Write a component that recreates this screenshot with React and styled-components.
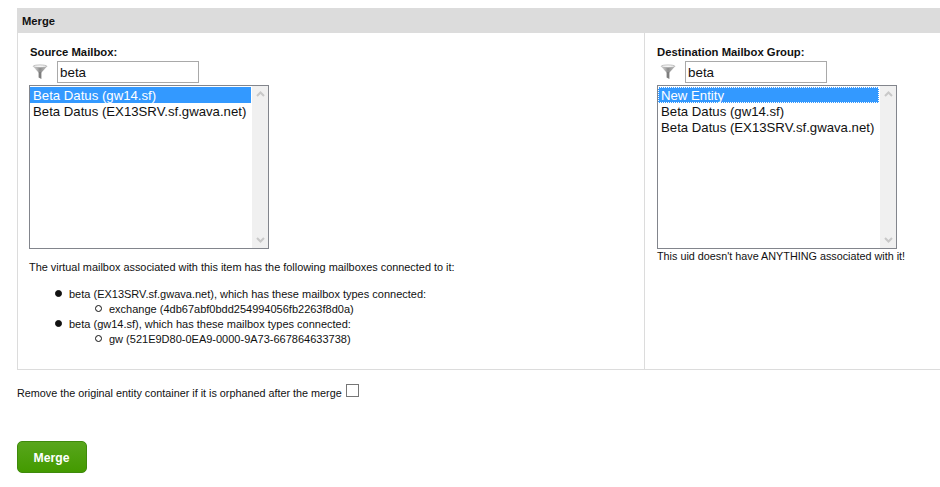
import styled, { createGlobalStyle } from "styled-components";

const GlobalStyle = createGlobalStyle`
  html, body {
    margin: 0;
    padding: 0;
    background: #fff;
    overflow: hidden;
  }
  body {
    font-family: "Liberation Sans", Arial, sans-serif;
    font-size: 11px;
    color: #111;
  }
`;

const Page = styled.div`
  width: 940px;
  height: 487px;
  padding: 8px 0 0 17px;
  box-sizing: border-box;
  overflow: hidden;
`;

const SectionTitle = styled.div`
  height: 25px;
  line-height: 26px;
  padding-left: 5px;
  background: #dcdcdc;
  font-size: 11.2px;
  font-weight: bold;
`;

const Panel = styled.div`
  display: grid;
  grid-template-columns: 626px 1fr;
  height: 336px;
  border-left: 1px solid #dcdcdc;
  border-bottom: 1px solid #dcdcdc;
`;

const Column = styled.div`
  padding: 13px 0 0 ${(p) => p.$pad}px;
  border-left: ${(p) => (p.$divider ? "1px solid #dcdcdc" : "none")};
`;

const FieldLabel = styled.div`
  padding-left: ${(p) => p.$indent || 0}px;
  font-size: 11.3px;
  font-weight: bold;
  line-height: 13px;
`;

const FilterRow = styled.div`
  display: flex;
  align-items: center;
  gap: 9px;
  height: 22px;
  margin-top: 2px;
  padding-left: 3px;
`;

const FilterInput = styled.input`
  width: 142px;
  height: 22px;
  box-sizing: border-box;
  border: 1px solid #a9a9a9;
  padding: 0 2px;
  font-family: inherit;
  font-size: 13.4px;
  color: #111;
  outline: none;
`;

const ListBox = styled.div`
  display: flex;
  width: 240px;
  height: 164px;
  margin-top: 2px;
  box-sizing: border-box;
  border: 1px solid #82858c;
  background: #fff;
`;

const Options = styled.div`
  flex: 1;
  padding: 1px 1px 0 0;
`;

const Option = styled.div`
  height: 16px;
  line-height: 17px;
  padding-left: 3px;
  font-size: 13.2px;
  white-space: nowrap;
  background: ${(p) => (p.$selected ? "#3399ff" : "transparent")};
  color: ${(p) => (p.$selected ? "#fff" : "#111")};
  outline: ${(p) => (p.$focused ? "1px dotted #fff" : "none")};
  outline-offset: -1px;
`;

const Scrollbar = styled.div`
  display: flex;
  flex-direction: column;
  justify-content: space-between;
  align-items: center;
  width: 16px;
  padding: 5px 0;
  box-sizing: border-box;
  background: #f0f0f0;
`;

const Note = styled.div`
  font-size: ${(p) => p.$size}px;
  line-height: 12px;
  margin-top: ${(p) => p.$top}px;
`;

const OuterList = styled.ul`
  margin: 14px 0 0;
  padding: 0 0 0 40px;
  font-size: 11px;
  line-height: 15px;
  list-style: none;
`;

const InnerList = styled.ul`
  margin: 0;
  padding: 0 0 0 40px;
  list-style: none;
`;

const Item = styled.li`
  position: relative;

  &::before {
    content: "";
    position: absolute;
    left: -14px;
    top: 3px;
    width: 7px;
    height: 7px;
    box-sizing: border-box;
    border-radius: 50%;
    border: 1.5px solid #111;
    background: ${(p) => (p.$hollow ? "#fff" : "#111")};
  }
`;

const OrphanRow = styled.div`
  display: flex;
  align-items: flex-start;
  margin-top: 14px;
  height: 16px;
  font-size: 10.8px;
  line-height: 19px;
`;

const OrphanBox = styled.span`
  width: 11px;
  height: 11px;
  margin-left: 4px;
  border: 1px solid #767676;
  background: #fff;
`;

const MergeButton = styled.button`
  display: block;
  width: 70px;
  height: 32px;
  margin-top: 41px;
  border: 1px solid #3f8a0c;
  border-radius: 5px;
  background: linear-gradient(#58a61c, #439a00);
  color: #fff;
  font-family: inherit;
  font-size: 12.2px;
  font-weight: bold;
  padding: 1px 1px 0 0;
`;

const FunnelIcon = ({ id }) => (
  <svg width="16" height="16" viewBox="0 0 16 16">
    <defs>
      <linearGradient id={id} x1="0" x2="1" y1="0" y2="0">
        <stop offset="0" stopColor="#ececec" />
        <stop offset="0.5" stopColor="#8c8c8c" />
        <stop offset="1" stopColor="#c6c6c6" />
      </linearGradient>
    </defs>
    <path d="M0.5 2 Q8 0 15.5 2 L9.5 8.5 H6.5 Z" fill={`url(#${id})`} />
    <path d="M6.6 8 H9.4 V15 L6.6 13.5 Z" fill="#7d7d7d" />
    <ellipse cx="8" cy="2.2" rx="6.8" ry="1.3" fill="#f6f6f6" stroke="#a6a6a6" strokeWidth="0.6" />
  </svg>
);

const Chevron = ({ up }) => (
  <svg width="9" height="6" viewBox="0 0 9 6">
    <path d={up ? "M1 5 L4.5 1.5 L8 5" : "M1 1 L4.5 4.5 L8 1"} fill="none" stroke="#c8c8c8" strokeWidth="2" />
  </svg>
);

const MailboxList = ({ items }) => (
  <ListBox>
    <Options>
      {items.map((item) => (
        <Option key={item.label} $selected={item.selected} $focused={item.focused}>
          {item.label}
        </Option>
      ))}
    </Options>
    <Scrollbar>
      <Chevron up />
      <Chevron />
    </Scrollbar>
  </ListBox>
);

const sourceItems = [
  { label: "Beta Datus (gw14.sf)", selected: true },
  { label: "Beta Datus (EX13SRV.sf.gwava.net)" },
];

const destinationItems = [
  { label: "New Entity", selected: true, focused: true },
  { label: "Beta Datus (gw14.sf)" },
  { label: "Beta Datus (EX13SRV.sf.gwava.net)" },
];

export default function App() {
  return (
    <Page>
      <GlobalStyle />
      <SectionTitle>Merge</SectionTitle>
      <Panel>
        <Column $pad={11}>
          <FieldLabel $indent={1}>Source Mailbox:</FieldLabel>
          <FilterRow>
            <FunnelIcon id="funnel-source" />
            <FilterInput defaultValue="beta" />
          </FilterRow>
          <MailboxList items={sourceItems} />
          <Note $top={12} $size={10.9}>The virtual mailbox associated with this item has the following mailboxes connected to it:</Note>
          <OuterList>
            <Item>
              beta (EX13SRV.sf.gwava.net), which has these mailbox types connected:
              <InnerList>
                <Item $hollow>exchange (4db67abf0bdd254994056fb2263f8d0a)</Item>
              </InnerList>
            </Item>
            <Item>
              beta (gw14.sf), which has these mailbox types connected:
              <InnerList>
                <Item $hollow>gw (521E9D80-0EA9-0000-9A73-667864633738)</Item>
              </InnerList>
            </Item>
          </OuterList>
        </Column>
        <Column $pad={12} $divider>
          <FieldLabel>Destination Mailbox Group:</FieldLabel>
          <FilterRow>
            <FunnelIcon id="funnel-destination" />
            <FilterInput defaultValue="beta" />
          </FilterRow>
          <MailboxList items={destinationItems} />
          <Note $top={1} $size={10.8}>This uid doesn't have ANYTHING associated with it!</Note>
        </Column>
      </Panel>
      <OrphanRow>
        Remove the original entity container if it is orphaned after the merge
        <OrphanBox />
      </OrphanRow>
      <MergeButton>Merge</MergeButton>
    </Page>
  );
}
